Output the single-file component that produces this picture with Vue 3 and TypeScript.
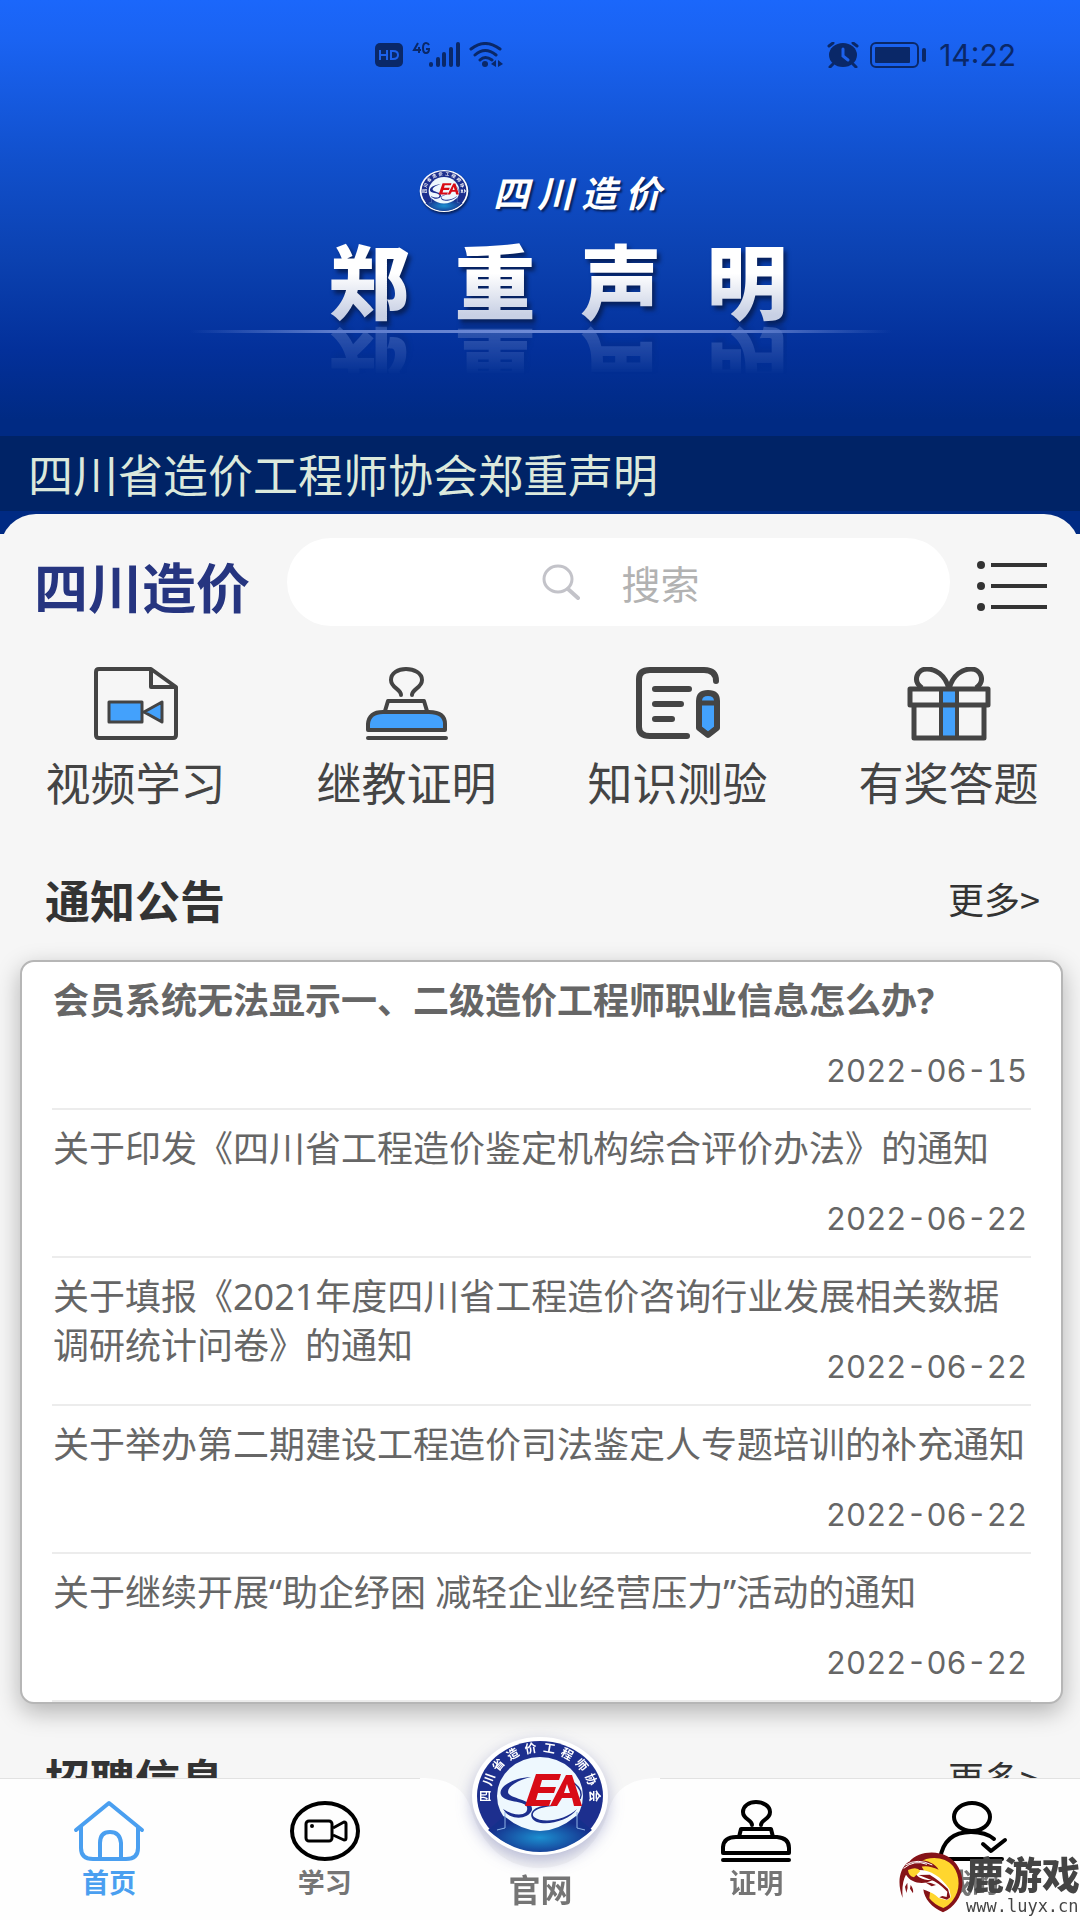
<script setup lang="ts">
interface Notice {
  title: string
  date: string
  strong?: boolean
}

const notices: Notice[] = [
  { title: '会员系统无法显示一、二级造价工程师职业信息怎么办?', date: '2022-06-15', strong: true },
  { title: '关于印发《四川省工程造价鉴定机构综合评价办法》的通知', date: '2022-06-22' },
  { title: '关于填报《2021年度四川省工程造价咨询行业发展相关数据调研统计问卷》的通知', date: '2022-06-22' },
  { title: '关于举办第二期建设工程造价司法鉴定人专题培训的补充通知', date: '2022-06-22' },
  { title: '关于继续开展“助企纾困 减轻企业经营压力”活动的通知', date: '2022-06-22' },
]

const brand = [...'四川造价']
const headline = [...'郑重声明']

// Ring lettering of the association emblem, spread over the upper half
const ring = [...'四川省造价工程师协会'].map((char, i) => {
  const angle = -90 + i * 20
  const rad = (angle * Math.PI) / 180
  return {
    char,
    transform: `translate(${(70 + 54 * Math.sin(rad)).toFixed(1)} ${(60 - 48 * Math.cos(rad)).toFixed(1)}) rotate(${angle})`,
  }
})
</script>

<template>
  <div class="page">
    <svg class="defs" width="0" height="0" aria-hidden="true">
      <defs>
        <radialGradient id="pool" cx="50%" cy="60%" r="50%">
          <stop offset="0" stop-color="#1c8fd0" />
          <stop offset="1" stop-color="#15308c" />
        </radialGradient>
        <symbol id="emblem" viewBox="0 0 140 120">
          <ellipse cx="70" cy="60" rx="68" ry="59" fill="#fff" />
          <ellipse cx="70" cy="60" rx="63" ry="55" fill="#1d2f8e" />
          <ellipse cx="70" cy="60" rx="43" ry="39" fill="#eef8fe" />
          <path d="M34 80 Q70 110 106 80 L122 94 Q98 116 70 116 Q42 116 18 94Z" fill="url(#pool)" />
          <path d="M35 76V92L27 94M107 76V92L115 94" fill="none" stroke="#8fb3e6" stroke-width="1" />
          <path d="M61 41 C42 42 28 51 31 59 C35 67 54 64 57 71 C59 79 47 82 33 73 C40 85 58 84 62 74 C64 63 38 63 38 56 C38 50 48 44 61 41Z" fill="#1d2f8e" />
          <path d="M84 70 C68 71 60 76 64 81 C73 88 96 84 107 73 C98 87 67 92 62 82 C58 73 72 68 84 70Z" fill="#1d2f8e" />
          <path d="M104 47 Q114 55 110 63" fill="none" stroke="#1d2f8e" stroke-width="1.5" />
          <path d="M66 38H91L89 44H72L70 51H86L84 57H68L66 64H81L79 70H55Z" fill="#d80b16" />
          <path d="M96 39H102L112 70H104L102 62H92L87 70H80ZM97 48L94 57H100Z" fill="#d80b16" fill-rule="evenodd" />
          <text
            v-for="item in ring"
            :key="item.char"
            :transform="item.transform"
            y="4"
            text-anchor="middle"
            fill="#fff"
            font-size="12"
            font-weight="700"
          >{{ item.char }}</text>
        </symbol>
      </defs>
    </svg>

    <header class="banner">
      <div class="status">
        <div class="signals">
          <svg width="130" height="26" viewBox="0 0 130 26" fill="#0a2868" aria-hidden="true">
            <rect y="1" width="28" height="24" rx="5" />
            <path d="M5 8V18M5 13H12M12 8V18M16 9V17H18Q23 17 23 13T18 9Z" fill="none" stroke="#1c61ec" stroke-width="2" />
            <path d="M43 1L39 8H46M44 5V11M54 3Q53 1 51 1Q48 1 48 6T51 11Q54 11 54 7H51" fill="none" stroke="#0a2868" stroke-width="2" />
            <rect x="54" y="20" width="4" height="5" rx="2" />
            <rect x="61" y="15" width="4" height="10" rx="2" />
            <rect x="67" y="10" width="4" height="15" rx="2" />
            <rect x="74" y="5" width="4" height="20" rx="2" />
            <rect x="81" y="0" width="4" height="25" rx="2" />
            <path d="M96 7Q110-4 125 7M100 13Q110 4 121 13M105 18Q110 13 117 18" fill="none" stroke="#0a2868" stroke-width="3" stroke-linecap="round" />
            <circle cx="110" cy="22" r="3" />
            <path d="M116 22L121 18V25ZM128 22L123 18V25Z" />
          </svg>
        </div>
        <div class="signals">
          <svg width="100" height="26" viewBox="0 0 100 26" aria-hidden="true">
            <ellipse cx="16" cy="13" rx="14" ry="12" fill="#0a2868" />
            <path d="M2 4L6 1M30 4L26 1M6 22L3 25M26 22L29 25" stroke="#0a2868" stroke-width="3" stroke-linecap="round" />
            <path d="M16 7V14L21 18" fill="none" stroke="#1c61ec" stroke-width="3" stroke-linecap="round" />
            <rect x="44" y="1" width="47" height="24" rx="5" fill="none" stroke="#0a2868" stroke-width="2" />
            <rect x="48" y="5" width="35" height="16" rx="1" fill="#0a2868" />
            <rect x="95" y="6" width="4" height="14" rx="2" fill="#0a2868" />
          </svg>
          <span class="clock">14:22</span>
        </div>
      </div>
      <div class="brand">
        <svg class="brand-logo" viewBox="0 0 140 120" aria-hidden="true"><use href="#emblem" /></svg>
        <div class="brand-name"><span v-for="char in brand" :key="char">{{ char }}</span></div>
      </div>
      <div class="stage">
        <h1 class="headline"><span v-for="char in headline" :key="char">{{ char }}</span></h1>
      </div>
      <p class="caption">四川省造价工程师协会郑重声明</p>
    </header>

    <main class="sheet">
      <div class="toolbar">
        <h2 class="app-name">四川造价</h2>
        <label class="search">
          <svg width="38" height="36" viewBox="0 0 38 36" fill="none" stroke="#c3c3c9" stroke-width="3" aria-hidden="true">
            <ellipse cx="16" cy="15" rx="14" ry="13" />
            <path d="M26 25L36 34" stroke-width="4" stroke-linecap="round" />
          </svg>
          <input type="text" placeholder="搜索" aria-label="搜索" />
        </label>
        <button class="menu" type="button" aria-label="菜单">
          <svg width="72" height="50" viewBox="0 0 72 50" fill="#333" aria-hidden="true">
            <circle cx="5" cy="4" r="4" /><circle cx="5" cy="25" r="4" /><circle cx="5" cy="46" r="4" />
            <path d="M15 2H71V6H15ZM15 23H71V27H15ZM15 44H71V48H15Z" />
          </svg>
        </button>
      </div>

      <nav class="features">
        <a href="#video">
          <svg width="84" height="74" viewBox="0 0 84 74" fill="none" stroke="#444" stroke-width="4" stroke-linejoin="round" aria-hidden="true">
            <path d="M5 2H57L82 20V68Q82 71 79 71H5Q2 71 2 68V5Q2 2 5 2Z" />
            <path d="M57 3V20H81" />
            <path d="M15 35H48V55H15ZM50 45L68 35V55Z" fill="#43a1fc" stroke-width="3" />
          </svg>
          <span>视频学习</span>
        </a>
        <a href="#certificate">
          <svg width="84" height="74" viewBox="0 0 84 74" fill="none" stroke="#444" stroke-width="4" stroke-linecap="round" stroke-linejoin="round" aria-hidden="true">
            <path d="M36 28C36 22 26 21 26 13C26 6 33 2 41 2S57 6 57 13C57 21 47 22 47 28" />
            <path d="M20 44L23 34H59L62 44" />
            <path d="M3 63V57Q4 45 18 45H64Q80 45 80 57V63Z" fill="#43a1fc" />
            <path d="M3 71H81" />
          </svg>
          <span>继教证明</span>
        </a>
        <a href="#quiz">
          <svg width="84" height="74" viewBox="0 0 84 74" fill="none" stroke="#444" stroke-width="6" stroke-linecap="round" stroke-linejoin="round" aria-hidden="true">
            <path d="M51 69H14Q3 69 3 60V12Q3 3 14 3H68Q80 3 80 14M19 22H53M19 37H45M19 52H36" />
            <path d="M63 34Q63 26 72 26T81 34V61L72 68L63 61Z" fill="#43a1fc" />
            <path d="M64 36H81" stroke-width="5" />
          </svg>
          <span>知识测验</span>
        </a>
        <a href="#prize">
          <svg width="84" height="74" viewBox="0 0 84 74" fill="none" stroke="#444" stroke-width="5" stroke-linejoin="round" aria-hidden="true">
            <path d="M34 22H50V71H34Z" fill="#43a1fc" stroke-width="4" />
            <path d="M3 22H81V38H3ZM7 38V71H77V38" />
            <path d="M42 22C38 7 28 2 20 2C10 2 5 14 15 21M42 22C46 7 56 2 64 2C74 2 79 14 69 21" />
          </svg>
          <span>有奖答题</span>
        </a>
      </nav>

      <section>
        <div class="section-head">
          <h2>通知公告</h2>
          <a href="#notices">更多&gt;</a>
        </div>
        <ul class="card">
          <li v-for="notice in notices" :key="notice.title" class="notice">
            <a href="#notice" :class="{ strong: notice.strong }">{{ notice.title }}</a>
            <time :datetime="notice.date">{{ notice.date }}</time>
          </li>
        </ul>
      </section>

      <section>
        <div class="section-head jobs">
          <h2>招聘信息</h2>
          <a href="#jobs">更多&gt;</a>
        </div>
      </section>
    </main>

    <nav class="tabbar">
      <div class="tabbar-back">
        <i></i>
        <svg width="240" height="142" viewBox="0 0 240 142" aria-hidden="true">
          <path d="M0 0C28 0 42 9 50 28C62 74 92 90 120 90S178 74 190 28C198 9 212 0 240 0V142H0Z" fill="#fefefe" />
        </svg>
        <i></i>
      </div>
      <a class="tab active" href="#home">
        <svg width="72" height="62" viewBox="0 0 72 62" fill="none" stroke="#4a9ff0" stroke-width="4" stroke-linecap="round" stroke-linejoin="round" aria-hidden="true">
          <path d="M3 30L36 3L69 30M8 27V48Q8 59 20 59H53Q65 59 65 48V27M27 59V43Q27 32 37 32T48 43V59" />
        </svg>
        <span>首页</span>
      </a>
      <a class="tab" href="#study">
        <svg width="72" height="62" viewBox="0 0 72 62" fill="none" stroke="#000" stroke-width="4" stroke-linejoin="round" aria-hidden="true">
          <ellipse cx="36" cy="31" rx="33" ry="28" />
          <rect x="17" y="21" width="26" height="20" rx="3" stroke-width="3" />
          <path d="M44 28L55 22Q57 22 57 24V38Q57 40 55 40L44 35" stroke-width="3" />
          <circle cx="23" cy="26" r="1" stroke-width="2" />
        </svg>
        <span>学习</span>
      </a>
      <a class="tab site" href="#site">
        <svg class="site-logo" viewBox="0 0 140 120" aria-hidden="true"><use href="#emblem" /></svg>
        <span>官网</span>
      </a>
      <a class="tab" href="#proof">
        <svg width="72" height="62" viewBox="0 0 72 62" fill="none" stroke="#000" stroke-width="4" stroke-linecap="round" stroke-linejoin="round" aria-hidden="true">
          <path d="M32 25C32 19 23 20 23 12C23 6 29 2 36 2S50 6 50 12C50 20 41 19 41 25M19 37L21 29H51L53 37M3 53V47Q4 37 16 37H57Q69 38 69 48V53ZM3 60H69" />
        </svg>
        <span>证明</span>
      </a>
      <a class="tab" href="#mine">
        <svg width="72" height="62" viewBox="0 0 72 62" fill="none" stroke="#000" stroke-width="4" stroke-linecap="round" stroke-linejoin="round" aria-hidden="true">
          <ellipse cx="36" cy="17" rx="18" ry="14" />
          <path d="M4 59Q8 32 35 32Q50 32 58 39M4 59H66M47 44L55 51L69 40" />
        </svg>
        <span>我的</span>
      </a>
      <div class="watermark">
        <svg width="65" height="61" viewBox="0 0 195 183" aria-hidden="true">
          <path d="M32 28C55 2 105-8 145 13C178 31 193 67 190 101C186 137 166 165 132 181C99 167 75 140 73 112Z" fill="#851318" />
          <path d="M61 31C92 10 140 15 162 42C185 72 184 117 162 144Q151 160 133 168Q108 160 91 139L96 94Z" fill="#ffd62e" />
          <path d="M46 55C85 48 123 68 151 111L156 136L144 145L119 138C99 115 66 117 39 93Z" fill="#fff" />
          <path d="M11 138C-5 97-2 53 28 30C65 16 105 29 119 53C89 39 62 38 48 57C50 77 76 86 101 84C71 101 35 92 21 68Q7 92 11 138Z" fill="#851318" />
          <path d="M27 54Q54 42 64 57L45 76Q29 73 27 54Z" fill="#ffd62e" />
          <path d="M59 69L92 68Q119 84 147 111L154 136L144 143L121 136L130 132L143 135L145 119Q116 89 95 83ZM78 91Q96 91 111 99L98 103ZM25 92Q28 109 22 123L18 104ZM35 99Q45 112 42 124L33 110Z" fill="#851318" />
          <path d="M14 49Q46 22 84 37M20 39Q55 17 100 39" fill="none" stroke="#fff" stroke-width="3" />
        </svg>
        <div>
          <b>鹿游戏</b>
          <small>www.luyx.cn</small>
        </div>
      </div>
    </nav>
  </div>
</template>

<style>
body {
  margin: 0;
  background: #f6f6f6;
}
</style>

<style scoped>
.page {
  min-height: 100vh;
  overflow: hidden;
  font-family: "Noto Sans CJK SC", sans-serif;
  color: #333;
  background: #f6f6f6;
}
.page * {
  box-sizing: border-box;
}
.defs {
  position: absolute;
}
a {
  color: inherit;
  text-decoration: none;
}
h1, h2, p, ul {
  margin: 0;
  padding: 0;
}
svg {
  display: block;
  flex: none;
}

.banner {
  height: 534px;
  display: flex;
  flex-direction: column;
  align-items: center;
  background: linear-gradient(#1b67fb 0, #1a63f2 40px, #1150cc 160px, #0b41b0 260px, #03309a 350px, #002a83 420px, #002a83 100%);
}
.status {
  width: 100%;
  height: 110px;
  padding: 0 64px 0 375px;
  display: flex;
  align-items: center;
  justify-content: space-between;
}
.signals {
  display: flex;
  align-items: center;
  gap: 12px;
}
.clock {
  font: 30px/32px Inter, sans-serif;
  color: #0a2868;
}
.brand {
  margin-top: 58px;
  display: flex;
  align-items: center;
  gap: 24px;
}
.brand-logo {
  width: 50px;
  height: 46px;
  filter: drop-shadow(1px 2px 1px #06205c);
}
.brand-name {
  display: flex;
  gap: 8px;
  font-size: 36px;
  line-height: 42px;
  font-weight: 700;
  font-style: italic;
  color: #fff;
  text-shadow: 2px 2px 2px #06205c;
}
.stage {
  position: relative;
  margin-top: 18px;
  padding-left: 36px;
}
.stage::after {
  content: "";
  position: absolute;
  top: 98px;
  left: -102px;
  right: -104px;
  height: 3px;
  background: linear-gradient(90deg, transparent, #5c7bcb 20%, #6f8bd6 50%, #5c7bcb 80%, transparent);
}
.headline {
  display: flex;
  gap: 45px;
  font-size: 81px;
  line-height: 92px;
  font-weight: 900;
  color: transparent;
  background: linear-gradient(#fff 45%, #c8d0e4 90%);
  background-clip: text;
  filter: drop-shadow(3px 4px 2px #06205c);
  -webkit-box-reflect: below 0 linear-gradient(transparent 45%, rgba(255, 255, 255, 0.25));
}
.caption {
  width: 100%;
  margin-top: auto;
  margin-bottom: 23px;
  padding-left: 28px;
  font-size: 45px;
  line-height: 75px;
  color: #dce9dc;
  background: #002366;
}

.sheet {
  position: relative;
  margin-top: -20px;
  padding: 24px 0 112px;
  border-radius: 36px 36px 0 0;
  background: #f6f6f6;
}
.toolbar {
  padding: 0 32px 0 34px;
  display: flex;
  align-items: center;
}
.app-name {
  padding-top: 8px;
  font-size: 54px;
  line-height: 80px;
  font-weight: 700;
  color: #263580;
}
.search {
  flex: 1;
  min-width: 0;
  height: 88px;
  margin: 0 26px 0 37px;
  padding-left: 6px;
  display: flex;
  align-items: center;
  justify-content: center;
  gap: 42px;
  border-radius: 44px;
  background: #fff;
}
.search input {
  width: 80px;
  padding: 0;
  border: 0;
  outline: 0;
  background: none;
  font: 39px/56px "Noto Sans CJK SC", sans-serif;
  color: #333;
}
.search input::placeholder {
  color: #b2b2b2;
  opacity: 1;
}
.menu {
  padding: 8px 0 0;
  border: 0;
  background: none;
}
.features {
  margin: 41px -4px 0 0;
  display: grid;
  grid-template-columns: repeat(4, 1fr);
}
.features a {
  display: flex;
  flex-direction: column;
  align-items: center;
  gap: 14px;
  font-size: 45px;
  line-height: 54px;
  color: #444;
}
.section-head {
  margin-top: 64px;
  padding: 0 40px 0 45px;
  display: flex;
  align-items: flex-start;
  justify-content: space-between;
}
.section-head.jobs {
  margin-top: 48px;
}
.section-head h2 {
  font-size: 45px;
  line-height: 54px;
  font-weight: 700;
}
.section-head a {
  font-size: 36px;
  line-height: 50px;
}
.card {
  margin: 33px 17px 0 20px;
  padding: 0 30px;
  list-style: none;
  border: 2px solid #b6b6b6;
  border-radius: 14px;
  background: #fff;
  box-shadow: 0 8px 24px rgba(0, 0, 0, 0.28);
}
.notice {
  min-height: 148px;
  display: grid;
  border-bottom: 2px solid #ececec;
  color: #666;
}
.notice > * {
  grid-area: 1 / 1;
}
.notice a {
  padding: 14px 4px 0 1px;
  font-family: "Noto Sans", "Noto Sans CJK SC", sans-serif;
  font-size: 36px;
  line-height: 49px;
}
.notice a.strong {
  font-weight: 700;
}
.notice time {
  align-self: end;
  justify-self: end;
  padding: 0 4px 16px 0;
  font: 31px/42px Inter, sans-serif;
  font-variant-numeric: tabular-nums;
}

.tabbar {
  position: fixed;
  left: 0;
  right: 0;
  bottom: 0;
  height: 142px;
  padding-left: 1px;
  display: grid;
  grid-template-columns: repeat(5, 1fr);
}
.tabbar-back {
  position: absolute;
  inset: 0;
  display: flex;
}
.tabbar-back i {
  flex: 1;
  border-top: 1px solid #e2e2e2;
  background: #fefefe;
}
.tab {
  position: relative;
  padding-top: 22px;
  display: flex;
  flex-direction: column;
  align-items: center;
  gap: 4px;
  font-size: 27px;
  line-height: 32px;
  font-weight: 700;
  color: #757575;
}
.tab.active {
  color: #4a9ff0;
}
.tab.site {
  margin-top: -42px;
  padding-top: 0;
  gap: 12px;
  font-size: 32px;
  line-height: 40px;
}
.site-logo {
  width: 140px;
  height: 120px;
  filter: drop-shadow(0 6px 8px rgba(60, 70, 150, 0.35));
}
.watermark {
  position: absolute;
  right: 0;
  bottom: 2px;
  display: flex;
  align-items: flex-start;
  gap: 2px;
  color: #444;
}
.watermark div {
  display: flex;
  flex-direction: column;
}
.watermark b {
  font-size: 38px;
  line-height: 42px;
  font-weight: 900;
}
.watermark small {
  font: 17px/24px "DejaVu Sans Mono", monospace;
}
</style>
